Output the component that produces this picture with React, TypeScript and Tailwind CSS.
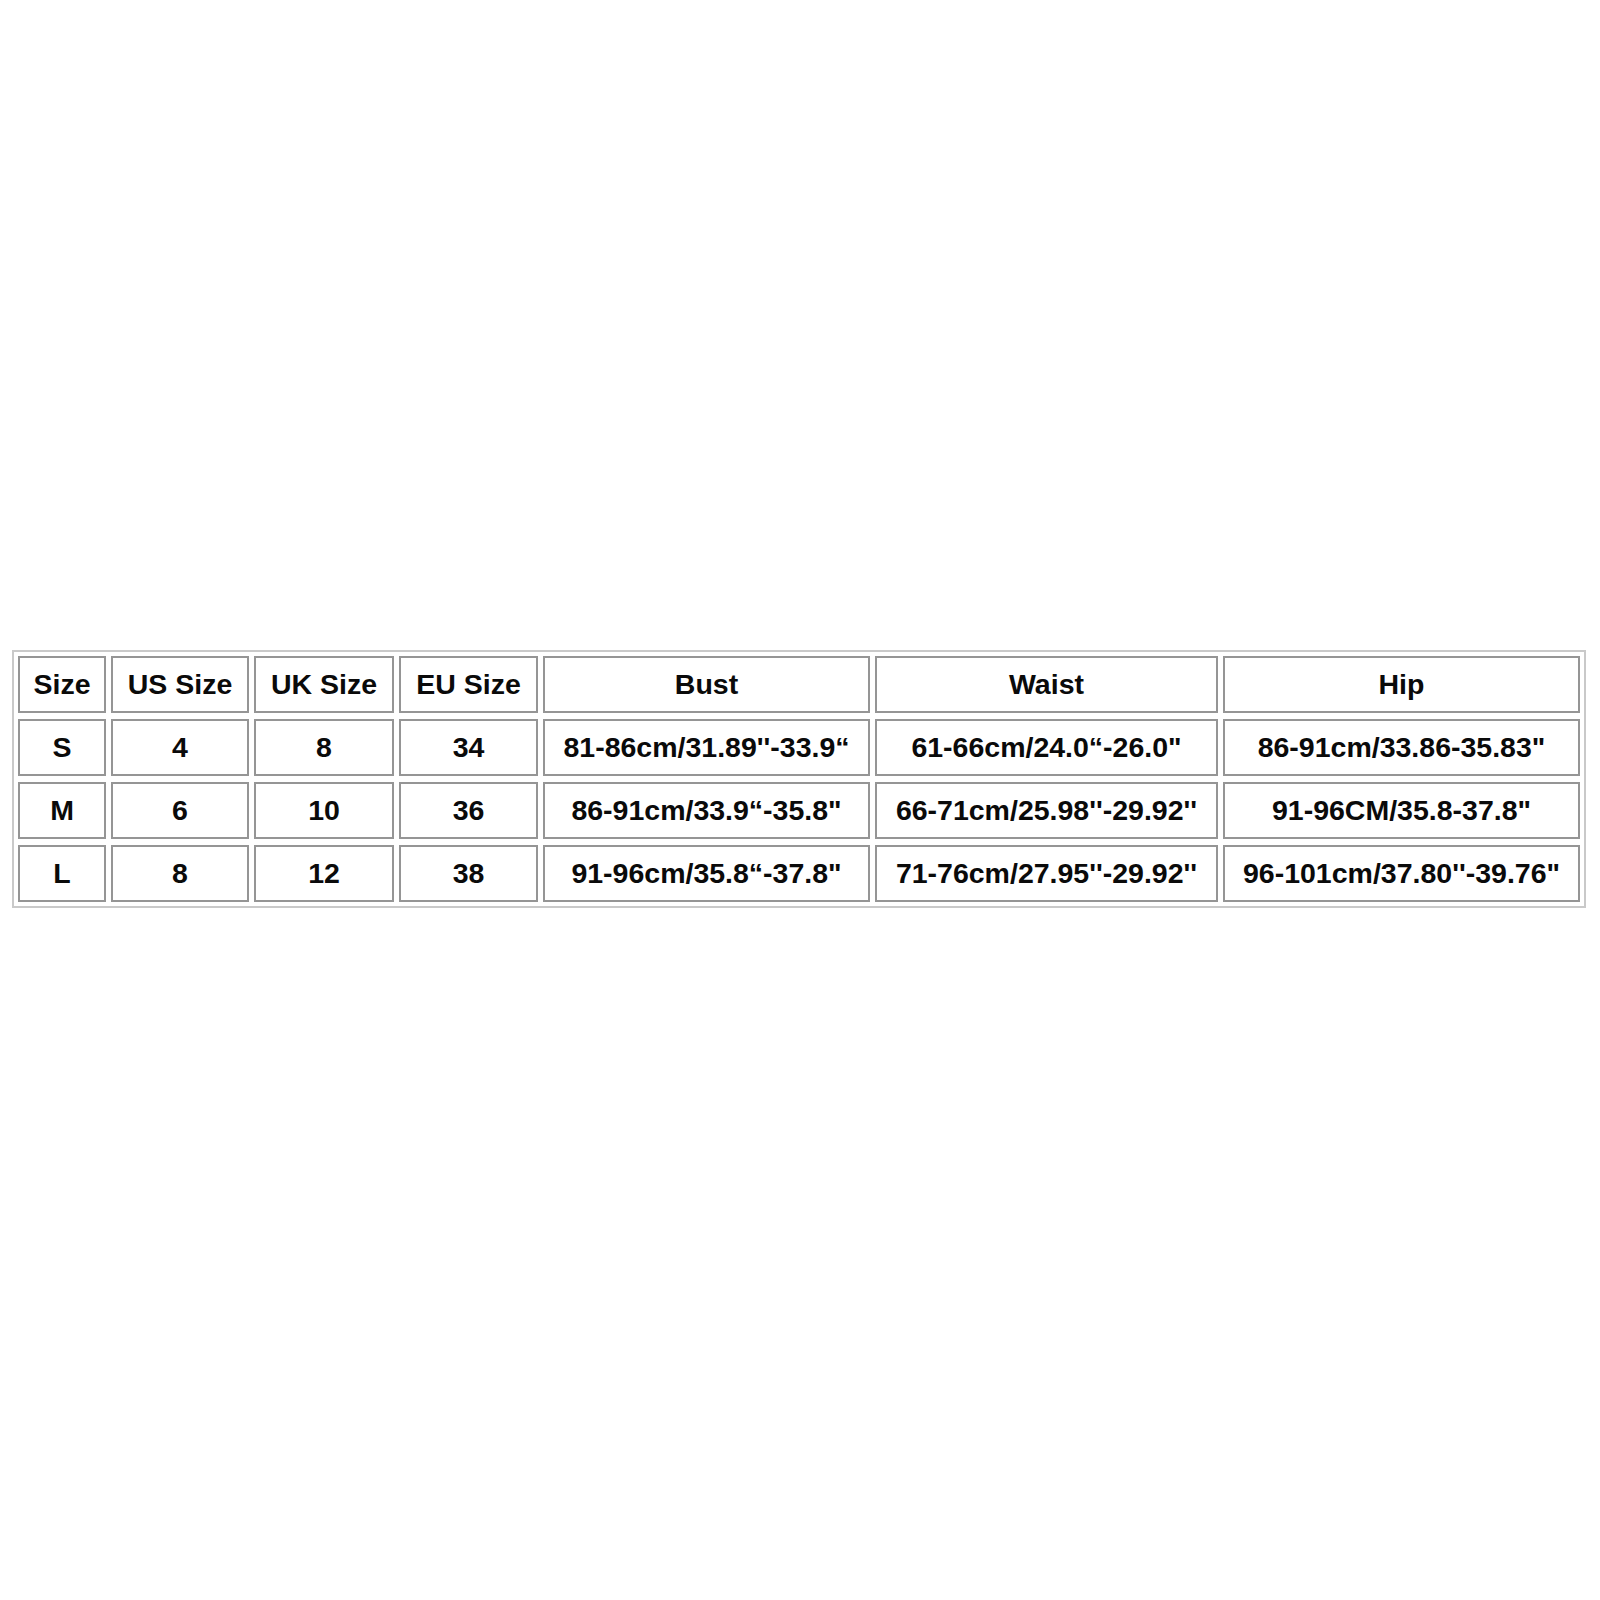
const header = ["Size", "US Size", "UK Size", "EU Size", "Bust", "Waist", "Hip"];

const rows = [
  ["S", "4", "8", "34", "81-86cm/31.89''-33.9\u201C", "61-66cm/24.0\u201C-26.0\"", "86-91cm/33.86-35.83\""],
  ["M", "6", "10", "36", "86-91cm/33.9\u201C-35.8\"", "66-71cm/25.98''-29.92''", "91-96CM/35.8-37.8\""],
  ["L", "8", "12", "38", "91-96cm/35.8\u201C-37.8\"", "71-76cm/27.95''-29.92''", "96-101cm/37.80''-39.76\""],
];

function Cell({ text }: { text: string }) {
  return (
    <div className="h-[57px] border-2 border-[#959595] flex items-center justify-center whitespace-nowrap">
      <span className="text-[28.5px] font-bold text-[#0a0a0a]">{text}</span>
    </div>
  );
}

export default function App() {
  return (
    <div className="w-[1600px] h-[1600px] bg-white pt-[650px] pl-[12px] font-['Liberation_Sans',Arial,sans-serif]">
      <div className="inline-block border-2 border-[#c9c9c9] p-[4px]">
        <div className="grid grid-cols-[88px_138px_140px_139px_327px_343px_357px] gap-x-[5px] gap-y-[6px]">
          {header.map((h) => (
            <Cell key={h} text={h} />
          ))}
          {rows.map((r) =>
            r.map((c, i) => <Cell key={r[0] + i} text={c} />)
          )}
        </div>
      </div>
    </div>
  );
}
